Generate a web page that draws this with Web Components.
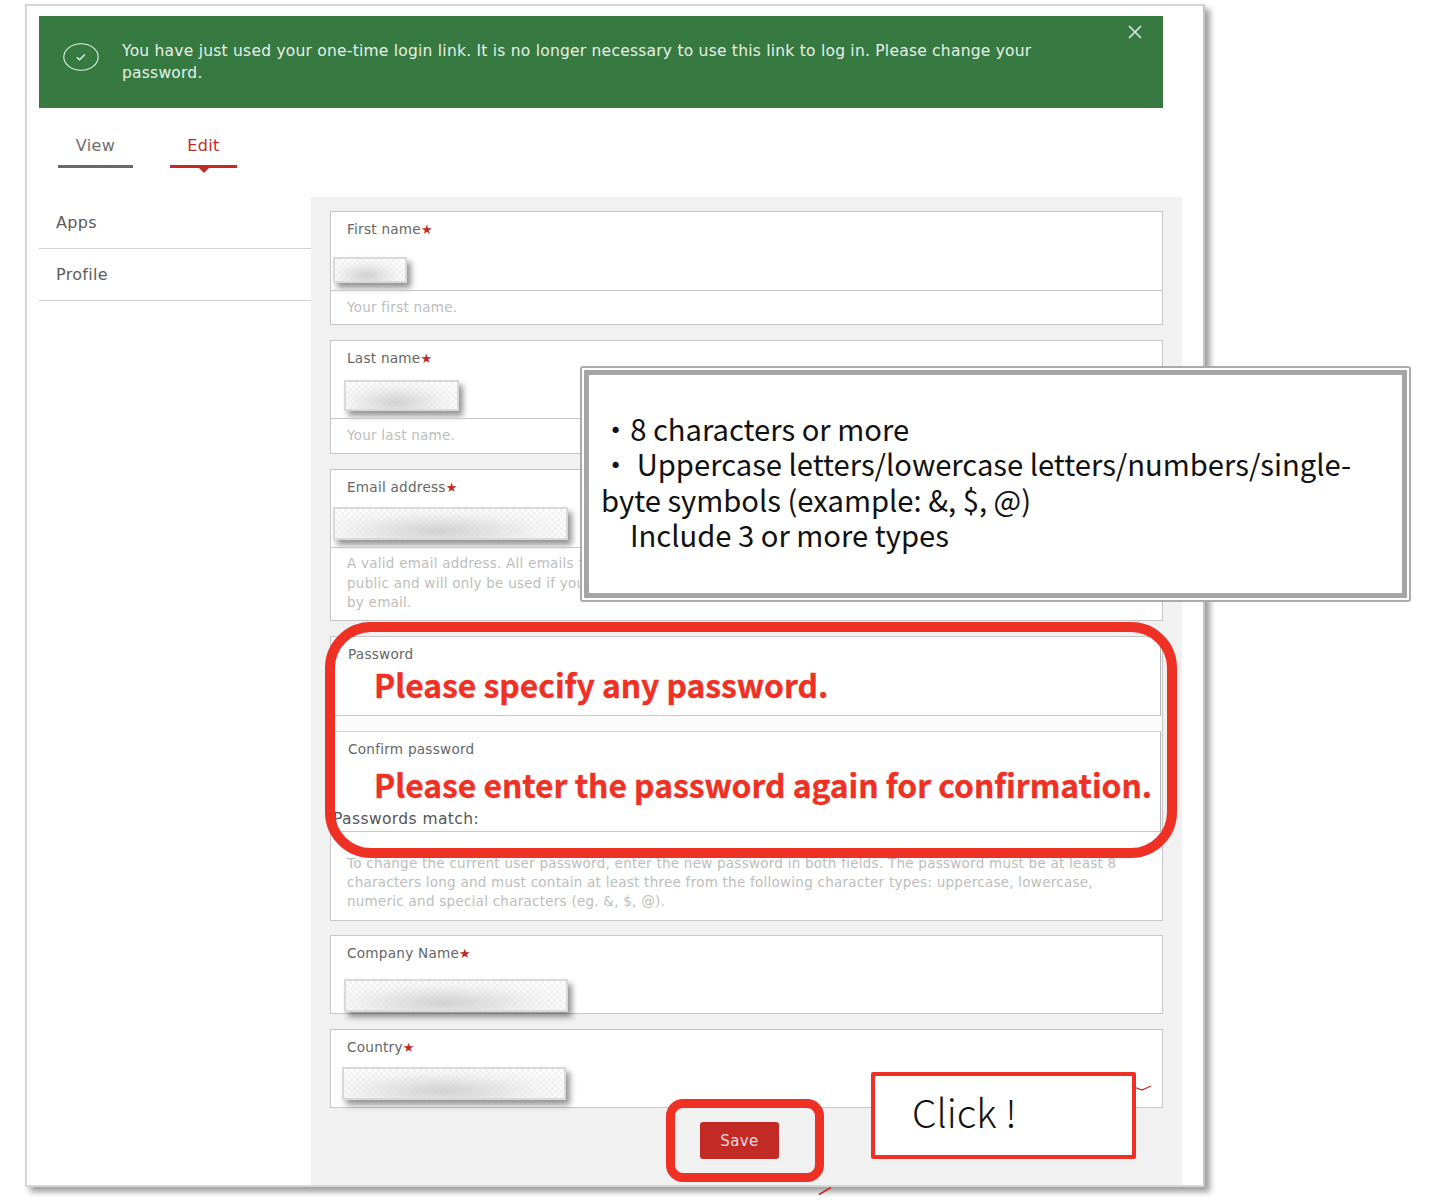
<!DOCTYPE html>
<html lang="en">
<head>
<meta charset="utf-8">
<title>Edit profile</title>
<style>
  html, body { margin: 0; padding: 0; background: #fff; }
  body { position: relative; width: 1456px; height: 1204px; overflow: hidden; font-family: "DejaVu Sans", "Liberation Sans", sans-serif; }
</style>
</head>
<body>
<profile-page>
  <alert-banner>You have just used your one-time login link. It is no longer necessary to use this link to log in. Please change your password.</alert-banner>
  <tab-bar></tab-bar>
  <side-nav slot="nav"></side-nav>
  <form-panel slot="panel">
    <form-field label="First name" required help="Your first name." style="--rx:2px;--rw:74px;--rh:26px;--ry:19px;--top:78px"></form-field>
    <form-field label="Last name" required help="Your last name." style="--rx:13px;--rw:115px;--rh:31px;--ry:13px;--top:77px"></form-field>
    <form-field label="Email address" required style="--rx:2px;--rw:235px;--rh:33px;--ry:11px;--top:77px">A valid email address. All emails from the system will be sent to this address. The email address is not made<br>public and will only be used if you wish to receive a new password or wish to receive certain news or notifications<br>by email.</form-field>
    <password-group>
      <password-input label="Password" style="--h:79px;--ty:3px">Please specify any password.</password-input>
      <password-input slot="confirm" label="Confirm password" match="Passwords match:" class="second" style="--h:101px;--ty:8px">Please enter the password again for confirmation.</password-input>
      To change the current user password, enter the new password in both fields. The password must be at least 8<br>characters long and must contain at least three from the following character types: uppercase, lowercase,<br>numeric and special characters (eg. &amp;, $, @).
    </password-group>
    <form-field label="Company Name" required style="--rx:13px;--rw:224px;--rh:33px;--ry:17px;--top:77px"></form-field>
    <form-field label="Country" required chevron style="--rx:11px;--rw:224px;--rh:33px;--ry:11px;--top:77px"></form-field>
    <save-button>Save</save-button>
  </form-panel>
</profile-page>

<note-box class="requirements">・8 characters or more<br>・ Uppercase letters/lowercase letters/numbers/single-<br>byte symbols (example: &amp;, $, @)<br><span style="padding-left:29px">Include 3 or more types</span></note-box>
<click-note>Click !</click-note>
<red-ring style="left:325px;top:622px;width:852px;height:236px;--bw:10px;--r:46px"></red-ring>
<red-ring style="left:666px;top:1099px;width:158px;height:83px;--bw:9px;--r:17px"></red-ring>
<svg style="position:absolute;left:817px;top:1186px" width="17" height="10" viewBox="0 0 17 10"><path d="M2 8.5 14 1.5" stroke="#c22a25" stroke-width="1.6" fill="none"/></svg>

<script>
function shadow(el, html) {
  el.attachShadow({ mode: "open" }).innerHTML = html;
}

const PAGE_FONT = `"DejaVu Sans", "Liberation Sans", sans-serif`;
const NOTE_FONT = `"Noto Sans CJK JP", "Noto Sans", sans-serif`;

class ProfilePage extends HTMLElement {
  connectedCallback() {
    shadow(this, `
      <style>
        :host { display: block; box-sizing: border-box; width: 1180px; height: 1183px; margin: 4px 0 0 25px; padding: 10px 0 0 12px;
          background: #fff; border: 2px solid #d6d6d6; border-right-color: #c4c4c4; box-shadow: 5px 5px 6px rgba(0,0,0,.38); overflow: hidden; font-family: ${PAGE_FONT}; }
        .body { display: flex; align-items: stretch; height: 988px; }
      </style>
      <slot></slot>
      <div class="body"><slot name="nav"></slot><slot name="panel"></slot></div>`);
  }
}

class AlertBanner extends HTMLElement {
  connectedCallback() {
    shadow(this, `
      <style>
        :host { display: flex; box-sizing: border-box; position: relative; width: 1124px; height: 92px; background: #367a42; color: #e6f0e6; padding: 24px 120px 0 24px; }
        svg.check { flex: none; width: 36px; height: 28px; margin: 3px 23px 0 0; }
        .msg { font-size: 15.5px; letter-spacing: .23px; line-height: 22px; width: 930px; }
        svg.close { position: absolute; right: 20px; top: 8px; width: 16px; height: 16px; }
      </style>
      <svg class="check" viewBox="0 0 36 28" fill="none" stroke="#e6f0e6"><ellipse cx="18" cy="14" rx="17.2" ry="13.2" stroke-width="1.1"/><path d="M13.8 14.2 16.5 16.8 21.8 11.4" stroke-width="1.4"/></svg>
      <div class="msg"><slot></slot></div>
      <svg class="close" viewBox="0 0 16 16" fill="none" stroke="#e6f0e6" stroke-width="1.5"><path d="M2 2 14 14M14 2 2 14"/></svg>`);
  }
}

class TabBar extends HTMLElement {
  connectedCallback() {
    shadow(this, `
      <style>
        :host { display: flex; gap: 37px; height: 89px; padding: 29px 0 0 19px; box-sizing: border-box; font-size: 16px; letter-spacing: .4px; }
        .tab { position: relative; box-sizing: border-box; height: 31px; text-align: center; border-bottom: 3px solid #6a6a6a; color: #6e6e6e; }
        .tab span { display: block; line-height: 18px; }
        .view { width: 75px; }
        .edit { width: 67px; color: #c22a25; border-bottom-color: #c22a25; }
        .edit::after { content: ""; position: absolute; left: 50%; bottom: -8px; margin-left: -6px; border: 6px solid transparent; border-bottom: 0; border-top-color: #c22a25; }
      </style>
      <div class="tab view"><span>View</span></div>
      <div class="tab edit"><span>Edit</span></div>`);
  }
}

class SideNav extends HTMLElement {
  connectedCallback() {
    shadow(this, `
      <style>
        :host { display: block; flex: none; width: 272px; font-size: 16px; letter-spacing: .3px; color: #5c5c5c; }
        div { box-sizing: border-box; height: 52px; padding: 16px 0 0 17px; line-height: 20px; border-bottom: 1px solid #d2d2d2; }
      </style>
      <div>Apps</div><div>Profile</div>`);
  }
}

class FormPanel extends HTMLElement {
  connectedCallback() {
    shadow(this, `
      <style>
        :host { display: flex; flex-direction: column; gap: 15px; box-sizing: border-box; flex: none; width: 871px; background: #f1f1f1; padding: 14px 19px 0; }
      </style>
      <slot></slot>`);
  }
}

class FormField extends HTMLElement {
  connectedCallback() {
    const star = this.hasAttribute("required") ? `<span class="star">★</span>` : "";
    const helpText = this.getAttribute("help");
    const hasHelp = helpText !== null || this.childNodes.length > 0;
    const chevron = this.hasAttribute("chevron")
      ? `<svg class="chevron" width="24" height="12" viewBox="0 0 24 12" fill="none" stroke="#c22a25" stroke-width="1.3"><path d="M2 2 13 6 22 2"/></svg>` : "";
    shadow(this, `
      <style>
        :host { display: block; position: relative; box-sizing: border-box; width: 833px; background: #fff; border: 1px solid #c6c6c6; }
        .top { box-sizing: border-box; height: var(--top); padding-top: 8px; }
        label { display: block; padding-left: 16px; font-size: 13.6px; letter-spacing: .25px; line-height: 18px; color: #666; }
        .star { color: #c22a25; font: 13px "DejaVu Sans", sans-serif; }
        .mask { box-sizing: border-box; margin: var(--ry) 0 0 var(--rx); width: var(--rw); height: var(--rh);
          border: 2px solid #d9d9d9; box-shadow: 4px 5px 6px rgba(0,0,0,.42);
          background: radial-gradient(ellipse at 45% 75%, rgba(205,205,205,.9), rgba(235,235,235,.5) 55%, rgba(255,255,255,0) 85%),
            repeating-conic-gradient(#f3f3f3 0 25%, #fff 0 50%) 0 0 / 6px 6px; }
        .help { border-top: 1px solid #c6c6c6; padding: 6.5px 16px 7.5px; font-size: 13.5px; letter-spacing: .25px; line-height: 19.4px; color: #bdbdbd; white-space: nowrap; overflow: hidden; }
        .chevron { position: absolute; right: 9px; top: 54px; }
      </style>
      <div class="top"><label>${this.getAttribute("label")}${star}</label><div class="mask"></div></div>
      ${hasHelp ? `<div class="help">${helpText || ""}<slot></slot></div>` : ""}
      ${chevron}`);
  }
}

class PasswordGroup extends HTMLElement {
  connectedCallback() {
    shadow(this, `
      <style>
        :host { display: block; box-sizing: border-box; width: 833px; height: 285px; margin-bottom: -1px; background: #fff; border: 1px solid #c6c6c6; }
        .inputs { display: flex; flex-direction: column; gap: 15px; background: #fbfbfb; }
        .help { padding: 22px 16px 0; font-size: 13.5px; letter-spacing: .25px; line-height: 19.2px; color: #bdbdbd; white-space: nowrap; }
      </style>
      <div class="inputs"><slot name="fields"></slot></div>
      <div class="help"><slot></slot></div>`);
    this.querySelectorAll("password-input").forEach(f => f.slot = "fields");
  }
}

class PasswordInput extends HTMLElement {
  connectedCallback() {
    const match = this.getAttribute("match");
    shadow(this, `
      <style>
        :host { display: block; position: relative; box-sizing: border-box; height: var(--h); background: #fff; border-bottom: 1px solid #c6c6c6; border-right: 1px solid #b4b4b4; margin-right: 1px; }
        :host(.second) { border-top: 1px solid #d6d6d6; }
        label { display: block; padding: 8px 0 0 17px; font-size: 13.6px; letter-spacing: .25px; line-height: 18px; color: #666; }
        .ask { margin: var(--ty) 0 0 43px; font: 700 31.8px/36px ${NOTE_FONT}; color: #ee3124; white-space: nowrap; -webkit-text-stroke: .35px #ee3124; }
        .match { position: absolute; left: 2px; bottom: 3px; font-size: 15.5px; letter-spacing: .4px; line-height: 18px; color: #555; }
      </style>
      <label>${this.getAttribute("label")}</label>
      <div class="ask"><slot></slot></div>
      ${match ? `<div class="match">${match}</div>` : ""}`);
  }
}

class SaveButton extends HTMLElement {
  connectedCallback() {
    shadow(this, `
      <style>
        :host { display: block; margin: -1px 0 0 370px; }
        button { display: block; width: 79px; height: 37px; border: 0; border-radius: 3px; background: #c22a25; color: #f6dcdc; font: 15px ${PAGE_FONT}; letter-spacing: .4px; padding: 0; }
      </style>
      <button type="button"><slot></slot></button>`);
  }
}

class NoteBox extends HTMLElement {
  connectedCallback() {
    shadow(this, `
      <style>
        :host { position: absolute; left: 580px; top: 366px; box-sizing: border-box; width: 831px; height: 236px; padding: 2px; background: #fff; border: 2px solid #ababab; border-radius: 3px; }
        .inner { box-sizing: border-box; height: 100%; padding: 36px 0 0 12px; border: 5px solid #a6a6a6; font: 29.2px/35.3px ${NOTE_FONT}; color: #111; white-space: nowrap; }
      </style>
      <div class="inner"><slot></slot></div>`);
  }
}

class ClickNote extends HTMLElement {
  connectedCallback() {
    shadow(this, `
      <style>
        :host { position: absolute; left: 871px; top: 1072px; box-sizing: border-box; width: 265px; height: 87px; padding: 10px 0 0 37px; background: #fff; border: 4px solid #ee3124; border-radius: 2px;
          font: 39px/50px ${NOTE_FONT}; font-weight: 300; color: #111; }
      </style>
      <slot></slot>`);
  }
}

class RedRing extends HTMLElement {
  connectedCallback() {
    shadow(this, `
      <style>
        :host { position: absolute; box-sizing: border-box; border: var(--bw) solid #ee3124; border-radius: var(--r); pointer-events: none; }
      </style>`);
  }
}

customElements.define("profile-page", ProfilePage);
customElements.define("alert-banner", AlertBanner);
customElements.define("tab-bar", TabBar);
customElements.define("side-nav", SideNav);
customElements.define("form-panel", FormPanel);
customElements.define("form-field", FormField);
customElements.define("password-group", PasswordGroup);
customElements.define("password-input", PasswordInput);
customElements.define("save-button", SaveButton);
customElements.define("note-box", NoteBox);
customElements.define("click-note", ClickNote);
customElements.define("red-ring", RedRing);
</script>
</body>
</html>
